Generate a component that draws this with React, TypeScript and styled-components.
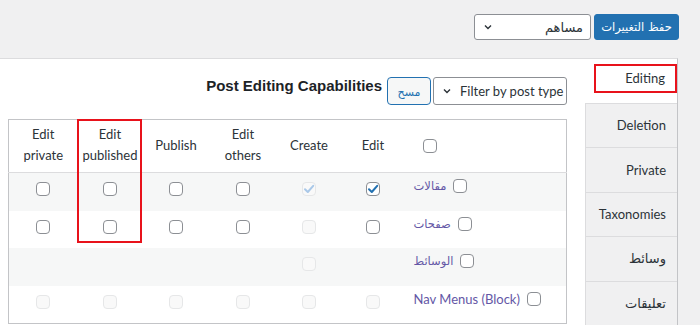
import React from "react";
import styled, { createGlobalStyle } from "styled-components";

const GlobalStyle = createGlobalStyle`
  html, body {
    margin: 0;
    padding: 0;
    background: #f0f0f1;
  }
  body {
    font-family: Lato, "DejaVu Sans", sans-serif;
    font-size: 13px;
    color: #2c3338;
    overflow: hidden;
  }
`;

const Page = styled.div`
  direction: rtl;
  width: 700px;
  height: 325px;
  overflow: hidden;
`;

const TopBar = styled.div`
  display: flex;
  gap: 3px;
  padding: 14px 21px 0 0;
`;

const SaveButton = styled.button`
  height: 26px;
  width: 85px;
  background: #2271b1;
  border: 1px solid #2271b1;
  border-radius: 3px;
  color: #fff;
  font-family: "DejaVu Sans", sans-serif;
  font-size: 11.5px;
  padding: 0;
`;

const Select = styled.div<{ $w: number; $h: number; $ltr?: boolean }>`
  box-sizing: border-box;
  width: ${(p) => p.$w}px;
  height: ${(p) => p.$h}px;
  display: flex;
  align-items: center;
  justify-content: space-between;
  flex-direction: ${(p) => (p.$ltr ? "row" : "row-reverse")};
  direction: ltr;
  background: #fff;
  border: 1px solid #8c8f94;
  border-radius: 3px;
  padding: 0 7px 0 8px;
  color: #2c3338;

  svg {
    flex: none;
  }
`;

const SelectText = styled.span<{ $arabic?: boolean }>`
  font-family: ${(p) => (p.$arabic ? '"DejaVu Sans", sans-serif' : "Lato, sans-serif")};
  font-size: 13px;
  margin-left: ${(p) => (p.$arabic ? "0" : "8px")};
  white-space: nowrap;
`;

const Panel = styled.div`
  display: flex;
  margin: 18px 22px 0 0;
  background: #fff;
  border-top: 1px solid #dcdcde;
  border-right: 1px solid #c3c4c7;
  height: 300px;
`;

const Tabs = styled.ul`
  list-style: none;
  margin: 0;
  padding: 0;
  width: 92px;
  flex: none;
  background: #f0f0f1;
`;

const Tab = styled.li<{ $active?: boolean }>`
  box-sizing: border-box;
  height: 44.5px;
  display: flex;
  align-items: center;
  padding-right: ${(p) => (p.$active ? "0" : "11px")};
  background: ${(p) => (p.$active ? "#fff" : "#f0f0f1")};
  border-bottom: 1px solid #dcdcde;
  border-left: ${(p) => (p.$active ? "none" : "1px solid #dcdcde")};
  color: #2c3338;
`;

const TabLabel = styled.span<{ $arabic?: boolean }>`
  font-family: ${(p) => (p.$arabic ? '"DejaVu Sans", sans-serif' : "Lato, sans-serif")};
  font-size: 13px;
`;

const Highlight = styled.span`
  box-sizing: border-box;
  display: flex;
  align-items: center;
  width: 83px;
  height: 29px;
  margin-top: -5px;
  padding-right: 10px;
  border: 2px solid #e8121b;
`;

const Content = styled.div`
  flex: 1;
  padding: 18px 18px 0 9px;
`;

const HeaderRow = styled.div`
  display: flex;
  align-items: flex-start;
  gap: 2px;
`;

const ClearButton = styled.button`
  box-sizing: border-box;
  height: 28px;
  width: 44px;
  background: #f6f7f7;
  border: 1px solid #2271b1;
  border-radius: 4px;
  color: #2271b1;
  font-family: "DejaVu Sans", sans-serif;
  font-size: 11px;
  padding: 2px 0 0;
`;

const Title = styled.h2`
  margin: 0 3px 0 0;
  font-family: "Liberation Sans", Arial, sans-serif;
  font-size: 15px;
  font-weight: bold;
  line-height: 18px;
  direction: ltr;
  color: #1d2327;
`;

const TableWrap = styled.div`
  position: relative;
  margin-top: 14px;
`;

const Table = styled.table`
  width: 559px;
  border-collapse: collapse;
  table-layout: fixed;
  border: 1px solid #c3c4c7;
  background: #fff;
`;

const Th = styled.th<{ $first?: boolean }>`
  height: 50px;
  padding: ${(p) => (p.$first ? "0 0 2px 18px" : "0 0 2px")};
  text-align: ${(p) => (p.$first ? "left" : "center")};
  font-weight: normal;
  font-size: 13px;
  line-height: 21px;
  color: #2c3338;
  border-bottom: 1px solid #dcdcde;
  vertical-align: middle;
`;

const Tr = styled.tr<{ $alt?: boolean }>`
  background: ${(p) => (p.$alt ? "#f6f7f7" : "#fff")};
`;

const Td = styled.td<{ $first?: boolean }>`
  height: 29.5px;
  padding: ${(p) => (p.$first ? "0 0 8px 9px" : "0 0 8px")};
  text-align: ${(p) => (p.$first ? "left" : "center")};
  vertical-align: middle;
`;

const RowLabel = styled.span`
  display: inline-flex;
  align-items: center;
  gap: 7px;
  color: #6457a6;
`;

const LabelText = styled.span<{ $arabic?: boolean }>`
  font-family: ${(p) => (p.$arabic ? '"DejaVu Sans", sans-serif' : "Lato, sans-serif")};
  font-size: ${(p) => (p.$arabic ? "11.5px" : "13px")};
  direction: ${(p) => (p.$arabic ? "rtl" : "ltr")};
`;

const Box = styled.span<{ $state: string }>`
  box-sizing: border-box;
  display: inline-flex;
  align-items: center;
  justify-content: center;
  vertical-align: middle;
  width: 14px;
  height: 14px;
  border-radius: 4px;
  border: 1px solid
    ${(p) => (p.$state === "off" || p.$state === "on" ? "#8c8f94" : "#e6e7e8")};
  background: ${(p) => (p.$state === "off" || p.$state === "on" ? "#fff" : "#f9f9f9")};
`;

const ColumnMark = styled.div`
  position: absolute;
  top: 0;
  left: 69px;
  width: 65px;
  height: 124px;
  box-sizing: border-box;
  border: 2px solid #e8121b;
  pointer-events: none;
`;

type BoxState = "off" | "on" | "dis" | "dison" | "none";

const Checkbox = ({ state }: { state: BoxState }) => {
  if (state === "none") return null;
  const checked = state === "on" || state === "dison";
  return (
    <Box $state={state}>
      {checked && (
        <svg width="12" height="12" viewBox="0 0 12 12">
          <path
            d="M2 6.3 L4.8 9 L10.2 2.8"
            fill="none"
            stroke={state === "on" ? "#2271b1" : "#a9c8e8"}
            strokeWidth="2"
            strokeLinecap="round"
            strokeLinejoin="round"
          />
        </svg>
      )}
    </Box>
  );
};

const Chevron = () => (
  <svg width="10" height="10" viewBox="0 0 10 10">
    <path d="M2 3.5 L5 6.5 L8 3.5" fill="none" stroke="#2c3338" strokeWidth="1.4" />
  </svg>
);

const columns = [
  ["Edit"],
  ["Create"],
  ["Edit", "others"],
  ["Publish"],
  ["Edit", "published"],
  ["Edit", "private"],
];

const colWidths = [162, 63, 65, 67, 67, 65, 69];

const rows: { label: string; arabic: boolean; cells: BoxState[] }[] = [
  { label: "مقالات", arabic: true, cells: ["on", "dison", "off", "off", "off", "off"] },
  { label: "صفحات", arabic: true, cells: ["off", "dis", "off", "off", "off", "off"] },
  { label: "الوسائط", arabic: true, cells: ["none", "dis", "none", "none", "none", "none"] },
  { label: "Nav Menus (Block)", arabic: false, cells: ["dis", "dis", "dis", "dis", "dis", "dis"] },
];

const tabs = ["Deletion", "Private", "Taxonomies", "وسائط", "تعليقات"];

export default function App() {
  return (
    <Page>
      <GlobalStyle />
      <TopBar>
        <SaveButton>حفظ التغييرات</SaveButton>
        <Select $w={117} $h={26}>
          <SelectText $arabic>مساهم</SelectText>
          <Chevron />
        </Select>
      </TopBar>
      <Panel>
        <Tabs>
          <Tab $active>
            <Highlight>
              <TabLabel>Editing</TabLabel>
            </Highlight>
          </Tab>
          {tabs.map((t) => (
            <Tab key={t}>
              <TabLabel $arabic={/[\u0600-\u06ff]/.test(t)}>{t}</TabLabel>
            </Tab>
          ))}
        </Tabs>
        <Content>
          <HeaderRow>
            <Select $w={134} $h={28} $ltr>
              <Chevron />
              <SelectText>Filter by post type</SelectText>
            </Select>
            <ClearButton>مسح</ClearButton>
            <Title>Post Editing Capabilities</Title>
          </HeaderRow>
          <TableWrap>
            <Table>
              <colgroup>
                {colWidths.map((w, i) => (
                  <col key={i} style={{ width: w }} />
                ))}
              </colgroup>
              <thead>
                <tr>
                  <Th $first>
                    <Checkbox state="off" />
                  </Th>
                  {columns.map((c, i) => (
                    <Th key={i}>
                      {c.map((line, j) => (
                        <div key={j}>{line}</div>
                      ))}
                    </Th>
                  ))}
                </tr>
              </thead>
              <tbody>
                {rows.map((r, i) => (
                  <Tr key={r.label} $alt={i % 2 === 0}>
                    <Td $first>
                      <RowLabel>
                        <Checkbox state="off" />
                        <LabelText $arabic={r.arabic}>{r.label}</LabelText>
                      </RowLabel>
                    </Td>
                    {r.cells.map((c, j) => (
                      <Td key={j}>
                        <Checkbox state={c} />
                      </Td>
                    ))}
                  </Tr>
                ))}
              </tbody>
            </Table>
            <ColumnMark />
          </TableWrap>
        </Content>
      </Panel>
    </Page>
  );
}
